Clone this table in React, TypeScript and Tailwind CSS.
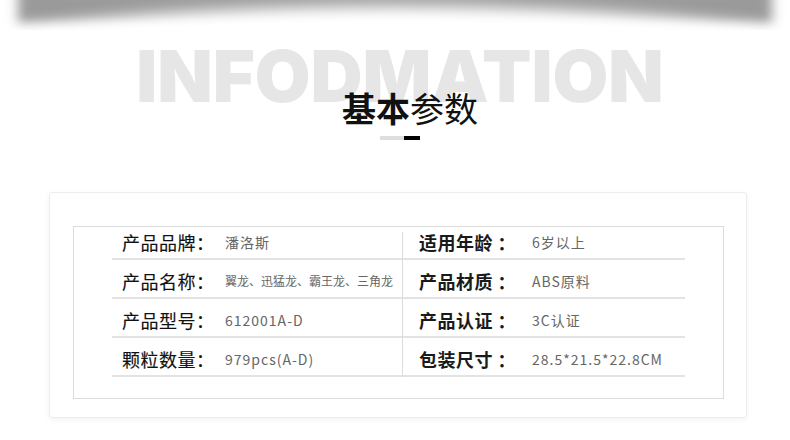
const rows = [
  { l: "产品品牌：", lv: "潘洛斯", r: "适用年龄 ：", rv: "6岁以上" },
  { l: "产品名称：", lv: "翼龙、迅猛龙、霸王龙、三角龙", r: "产品材质 ：", rv: "ABS原料", small: true },
  { l: "产品型号：", lv: "612001A-D", r: "产品认证 ：", rv: "3C认证" },
  { l: "颗粒数量：", lv: "979pcs(A-D)", r: "包装尺寸 ：", rv: "28.5*21.5*22.8CM" },
];

export default function App() {
  return (
    <div className="relative w-[790px] h-[440px] overflow-hidden bg-white font-['Noto_Sans_CJK_SC',sans-serif]">
      {/* curled paper shadow on top */}
      <div className="relative h-[30px] overflow-hidden">
        <div className="absolute left-[18px] right-[18px] top-[-12px] h-[36px] bg-[#9a9a9a] blur-[6px]" />
        <div className="absolute left-[-90px] right-[-90px] top-[6px] h-[130px] rounded-[50%] bg-white blur-[8px]" />
      </div>

      <div className="pl-[10px] text-center">
        <div className="mt-[7px] font-['Inter',sans-serif] text-[72px] font-black leading-[78px] tracking-[0px] text-[#e6e6e6]">
          INFODMATION
        </div>
      </div>

      <div className="relative -mt-[27px] pl-[30px] text-center text-[34px] leading-[40px] text-[#111]">
        <span className="font-bold">基本</span>
        <span>参数</span>
      </div>

      <div className="mt-[8px] flex justify-center pl-[10px]">
        <div className="h-[4px] w-[24px] bg-[#dedede]" />
        <div className="h-[4px] w-[16px] bg-black" />
      </div>

      <div className="ml-[49px] mt-[52px] h-[226px] w-[698px] rounded-[3px] border border-[#ececec] pl-[23px] pt-[33px] shadow-[0_2px_6px_rgba(0,0,0,0.05)]">
        <div className="h-[173px] w-[651px] border border-[#dcdcdc] pl-[38px] pt-[5px]">
          <div className="flex">
            <div className="w-[291px] border-r border-[#dcdcdc]">
              {rows.map((r, i) => (
                <div
                  key={i}
                  className={`flex items-end border-b-2 border-[#e3e3e3] pb-[6px] pl-[10px] ${i === 0 ? "h-[28px]" : "h-[39px]"}`}
                >
                  <span className="w-[103px] text-[18px] font-normal leading-[20px] tracking-[0.5px] text-[#111] [-webkit-text-stroke:0.15px_#111]">{r.l}</span>
                  <span
                    className={`leading-[20px] text-[#666] ${r.small ? "text-[12px] tracking-[0px]" : "text-[14px] tracking-[1px]"}`}
                  >
                    {r.lv}
                  </span>
                </div>
              ))}
            </div>
            <div className="w-[282px]">
              {rows.map((r, i) => (
                <div
                  key={i}
                  className={`flex items-end border-b-2 border-[#e3e3e3] pb-[6px] pl-[16px] ${i === 0 ? "h-[28px]" : "h-[39px]"}`}
                >
                  <span className="w-[113px] whitespace-pre text-[18px] font-bold leading-[20px] tracking-[0.5px] text-[#1a1a1a]">{r.r}</span>
                  <span className="text-[14px] leading-[20px] tracking-[1px] text-[#666]">{r.rv}</span>
                </div>
              ))}
            </div>
          </div>
        </div>
      </div>
    </div>
  );
}
